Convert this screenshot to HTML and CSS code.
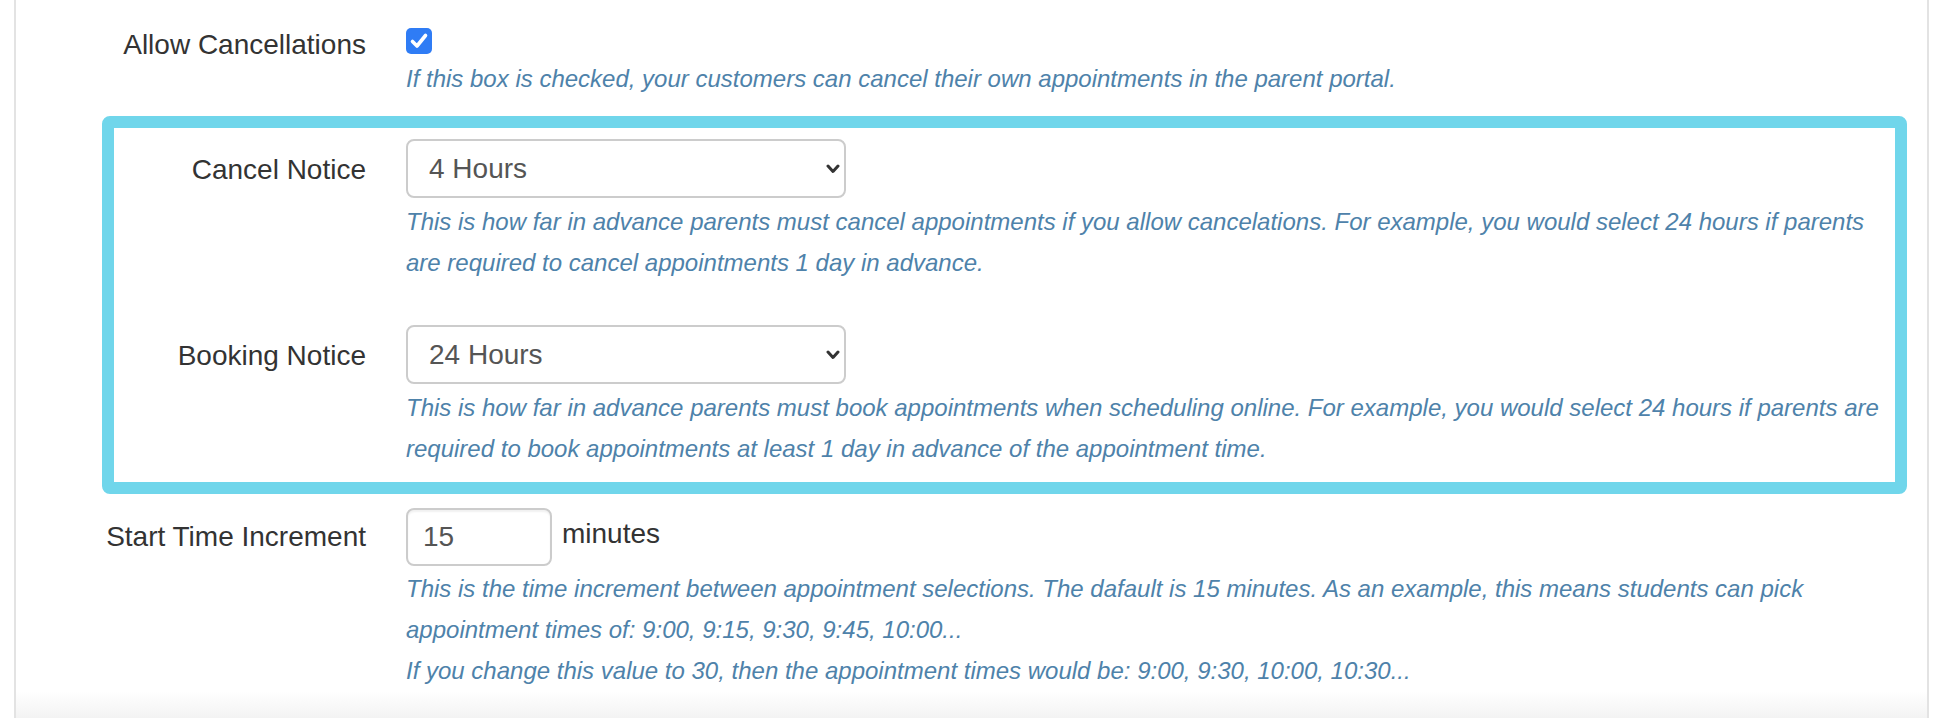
FILE: index.html
```html
<!DOCTYPE html>
<html lang="en">
<head>
<meta charset="utf-8">
<title>Appointment Settings</title>
<link rel="stylesheet" href="styles.css">
</head>
<body>
<div class="panel">
  <div class="form-row row-check">
    <label class="form-label">Allow Cancellations</label>
    <div class="control-col">
      <div class="check-wrap">
        <span class="checkbox">
          <svg width="26" height="26" viewBox="0 0 26 26"><polyline points="6.5,13.5 11,18 19.5,7.5" fill="none" stroke="#fff" stroke-width="3.6" stroke-linecap="round" stroke-linejoin="round"/></svg>
        </span>
      </div>
      <p class="help">If this box is checked, your customers can cancel their own appointments in the parent portal.</p>
    </div>
  </div>

  <div class="highlight">
    <div class="form-row row-select">
      <label class="form-label">Cancel Notice</label>
      <div class="control-col">
        <div class="select-wrap">
          <select class="select"><option>4 Hours</option></select>
          <svg class="chevron" width="14" height="10" viewBox="0 0 14 10"><polyline points="2,2 7,7.5 12,2" fill="none" stroke="#333" stroke-width="3" stroke-linecap="round" stroke-linejoin="round"/></svg>
        </div>
        <p class="help">This is how far in advance parents must cancel appointments if you allow cancelations. For example, you would select 24 hours if parents are required to cancel appointments 1 day in advance.</p>
      </div>
    </div>
    <div class="form-row row-select row-second">
      <label class="form-label">Booking Notice</label>
      <div class="control-col">
        <div class="select-wrap">
          <select class="select"><option>24 Hours</option></select>
          <svg class="chevron" width="14" height="10" viewBox="0 0 14 10"><polyline points="2,2 7,7.5 12,2" fill="none" stroke="#333" stroke-width="3" stroke-linecap="round" stroke-linejoin="round"/></svg>
        </div>
        <p class="help">This is how far in advance parents must book appointments when scheduling online. For example, you would select 24 hours if parents are required to book appointments at least 1 day in advance of the appointment time.</p>
      </div>
    </div>
  </div>

  <div class="form-row row-input">
    <label class="form-label">Start Time Increment</label>
    <div class="control-col">
      <div class="input-line">
        <input class="text-input" type="text" value="15">
        <span class="unit">minutes</span>
      </div>
      <p class="help">This is the time increment between appointment selections. The dafault is 15 minutes. As an example, this means students can pick appointment times of: 9:00, 9:15, 9:30, 9:45, 10:00...</p>
      <p class="help">If you change this value to 30, then the appointment times would be: 9:00, 9:30, 10:00, 10:30...</p>
    </div>
  </div>

  <div class="fade"></div>
</div>
</body>
</html>
```
FILE: styles.css
```css
html, body {
  margin: 0;
  padding: 0;
  background: #ffffff;
  overflow: hidden;
}

body {
  font-family: "Liberation Sans", Arial, Helvetica, sans-serif;
  color: #333333;
}

.panel {
  margin-left: 14px;
  width: 1915px;
  height: 718px;
  border-left: 2px solid #e3e3e3;
  border-right: 2px solid #e3e3e3;
  display: flex;
  flex-direction: column;
  box-sizing: border-box;
}

.form-row {
  display: grid;
  grid-template-columns: 252px 1fr;
  column-gap: 40px;
  align-items: start;
}

.panel > .form-row {
  padding-left: 98px;
  padding-right: 36px;
}

.row-check {
  padding-top: 25px;
}

.form-label {
  display: flex;
  justify-content: flex-end;
  white-space: nowrap;
  font-size: 28px;
  line-height: 40px;
  color: #333333;
}

.control-col {
  min-width: 0;
}

.check-wrap {
  height: 30px;
}

.checkbox {
  display: block;
  width: 26px;
  height: 26px;
  margin-top: 3px;
  background: #2f7cf5;
  border-radius: 5px;
}

.checkbox svg {
  display: block;
}

.help {
  margin: 0;
  font-size: 24px;
  font-style: italic;
  line-height: 41px;
  color: #4e82aa;
}

.highlight {
  margin: 17px 20px 0 86px;
  border: 12px solid #70d6eb;
  border-radius: 8px;
  padding: 11px 8px 13px 0;
}

.row-select .form-label {
  padding-top: 11px;
}

.row-second {
  margin-top: 42px;
}

.select-wrap {
  position: relative;
  width: 440px;
  height: 59px;
}

.select {
  -webkit-appearance: none;
  appearance: none;
  display: block;
  width: 100%;
  height: 59px;
  margin: 0;
  box-sizing: border-box;
  border: 2px solid #cccccc;
  border-radius: 8px;
  background: #ffffff;
  padding: 0 0 0 21px;
  font-family: "Liberation Sans", Arial, Helvetica, sans-serif;
  font-size: 28px;
  color: #555555;
}

.chevron {
  position: absolute;
  right: 6px;
  top: 25px;
}

.row-select .help {
  margin-top: 3px;
}

.row-input {
  margin-top: 14px;
}

.row-input .form-label {
  padding-top: 9px;
}

.input-line {
  display: flex;
  align-items: center;
  gap: 10px;
  height: 58px;
}

.text-input {
  width: 146px;
  height: 58px;
  margin: 0;
  box-sizing: border-box;
  border: 2px solid #cccccc;
  border-radius: 8px;
  padding: 0 0 0 15px;
  font-family: "Liberation Sans", Arial, Helvetica, sans-serif;
  font-size: 28px;
  color: #555555;
  box-shadow: inset 0 2px 2px rgba(0, 0, 0, 0.06);
  outline: none;
}

.unit {
  font-size: 28px;
  line-height: 40px;
  color: #333333;
  padding-bottom: 6px;
}

.input-line + .help {
  margin-top: 2px;
}

.fade {
  margin-top: auto;
  height: 30px;
  background: linear-gradient(to bottom, rgba(244, 244, 244, 0), #f3f3f3);
}
```
